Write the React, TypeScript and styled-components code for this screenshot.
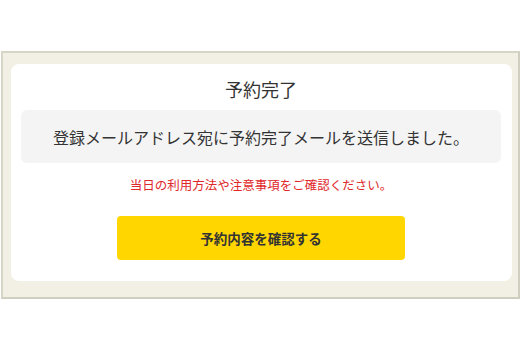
import React from 'react';
import styled, { createGlobalStyle } from 'styled-components';

const GlobalStyle = createGlobalStyle`
  html, body {
    margin: 0;
    padding: 0;
    background: #ffffff;
  }
  body {
    font-family: 'Noto Sans CJK JP', 'Noto Sans', sans-serif;
  }
`;

const Page = styled.div`
  padding-top: 51px;
  padding-left: 1px;
  width: 521px;
  box-sizing: border-box;
`;

const Frame = styled.div`
  width: 519px;
  box-sizing: border-box;
  background: #f2f0e5;
  border: 2px solid #cfcebf;
  border-top-color: #d6d5c6;
  border-left-color: #d6d5c6;
  padding: 11px 6px 16px 8px;
`;

const Card = styled.div`
  background: #ffffff;
  border-radius: 8px;
  padding: 10px 11px 21px 10px;
  display: flex;
  flex-direction: column;
  align-items: center;
`;

const Title = styled.h2`
  margin: 0;
  font-size: 18px;
  font-weight: 400;
  line-height: 30px;
  color: #333333;
`;

const Notice = styled.div`
  margin-top: 6px;
  width: 100%;
  height: 53px;
  box-sizing: border-box;
  background: #f4f4f4;
  border-radius: 6px;
  display: flex;
  align-items: center;
  justify-content: center;
  font-size: 16px;
  color: #333333;
`;

const Caution = styled.p`
  margin: 12px 0 0;
  font-size: 12.5px;
  line-height: 20px;
  color: #e0282a;
`;

const ConfirmButton = styled.button`
  margin-top: 21px;
  width: 288px;
  height: 44px;
  border: none;
  border-radius: 4px;
  background: #ffd600;
  color: #333333;
  font-family: inherit;
  font-size: 13.5px;
  font-weight: 700;
  cursor: pointer;
`;

const App: React.FunctionComponent = () => (
  <>
    <GlobalStyle />
    <Page>
      <Frame>
        <Card>
          <Title>予約完了</Title>
          <Notice>登録メールアドレス宛に予約完了メールを送信しました。</Notice>
          <Caution>当日の利用方法や注意事項をご確認ください。</Caution>
          <ConfirmButton>予約内容を確認する</ConfirmButton>
        </Card>
      </Frame>
    </Page>
  </>
);

export default App;
